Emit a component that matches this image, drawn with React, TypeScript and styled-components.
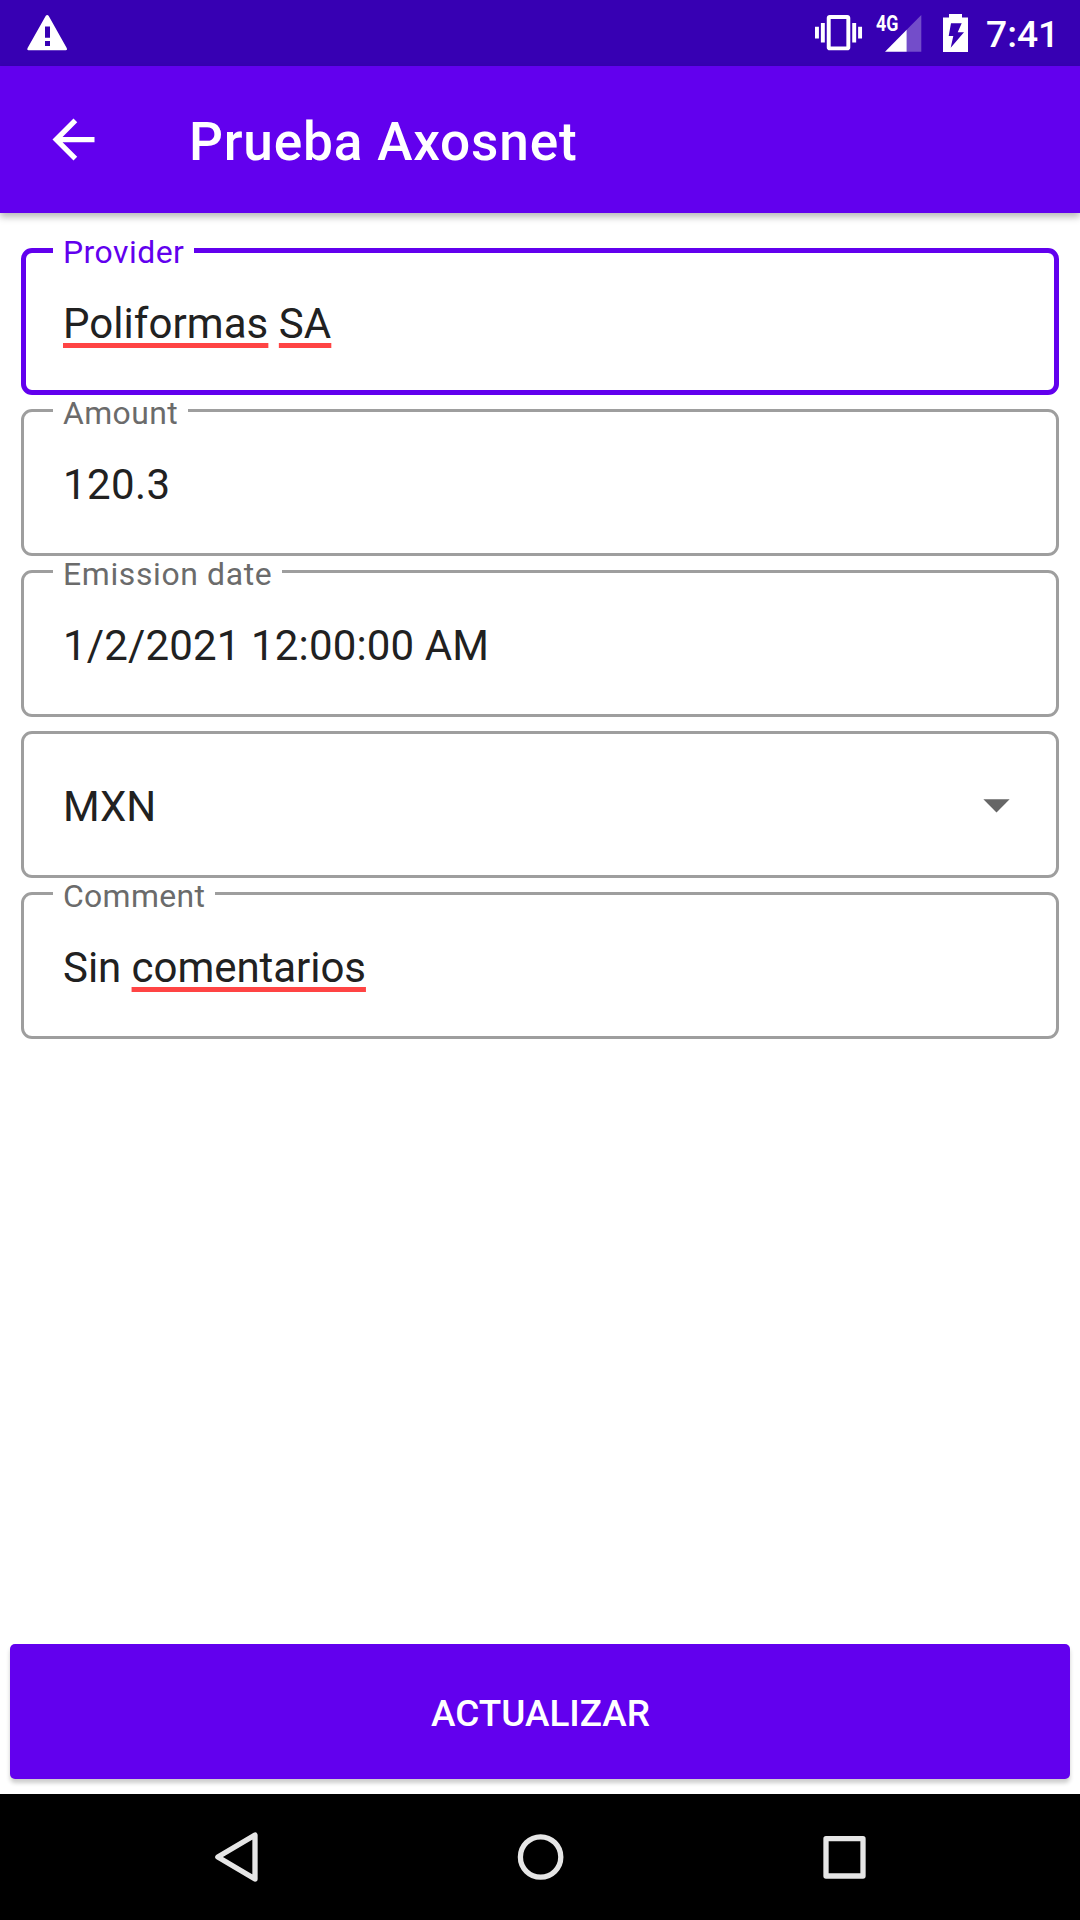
import React from "react";
import styled, { createGlobalStyle } from "styled-components";

const PRIMARY = "#6200ee";
const PRIMARY_DARK = "#3700b3";

const GlobalStyle = createGlobalStyle`
  *, *::before, *::after { box-sizing: border-box; }
  html, body { margin: 0; padding: 0; background: #fff; }
  body { font-family: Roboto, "Noto Sans", sans-serif; overflow: hidden; }
`;

const Screen = styled.div`
  display: flex;
  flex-direction: column;
  width: 1080px;
  height: 1920px;
  background: #fff;
`;

const StatusBar = styled.div`
  display: flex;
  justify-content: space-between;
  height: 66px;
  padding: 0 26px;
  background: ${PRIMARY_DARK};
  color: #fff;
`;

const StatusIcons = styled.div`
  display: flex;
  height: 66px;
`;

const StatusSvg = styled.svg`
  display: block;
  height: 66px;
  flex: none;
`;

const Clock = styled.span`
  width: 69px;
  padding-left: 1px;
  font-size: 37.2px;
  font-weight: 500;
  line-height: 68px;
  white-space: nowrap;
`;

const Signal = styled.div`
  display: grid;
  width: 57px;
  height: 66px;
  margin-left: 6px;
  & > * {
    grid-area: 1 / 1;
  }
`;

const NetworkType = styled.span`
  font-size: 22px;
  font-weight: 700;
  line-height: 47px;
  width: 28px;
  transform: scaleX(0.81);
  transform-origin: 0 0;
`;

const AppBar = styled.header`
  display: flex;
  align-items: center;
  flex: none;
  height: 147px;
  padding-left: 42px;
  background: ${PRIMARY};
  color: #fff;
  box-shadow: 0 4px 7px rgba(0, 0, 0, 0.28);
`;

const BackIcon = styled.svg`
  width: 63px;
  height: 63px;
  fill: #fff;
`;

const Title = styled.h1`
  margin: 0 0 0 84px;
  font-size: 53.2px;
  font-weight: 500;
  line-height: 62px;
  letter-spacing: 0.8px;
  padding-top: 5px;
`;

const Form = styled.main`
  display: flex;
  flex-direction: column;
  flex: 1;
  gap: 14px;
  padding: 35px 21px 0;
`;

const Field = styled.fieldset<{ $focused?: boolean }>`
  --stroke: ${(p) => (p.$focused ? 5 : 3)}px;
  margin: 0;
  min-width: 0;
  height: 147px;
  border: var(--stroke) solid ${(p) => (p.$focused ? PRIMARY : "#9e9e9e")};
  border-radius: 11px;
  padding: calc(51px - var(--stroke)) calc(42px - var(--stroke)) 0;
  color: ${(p) => (p.$focused ? PRIMARY : "#6b6b6b")};
`;

const Label = styled.legend<{ $tracking: number }>`
  height: var(--stroke);
  margin-left: -10px;
  padding: 0 10px;
  font-size: 31.9px;
  line-height: 8px;
  letter-spacing: ${(p) => p.$tracking}px;
  white-space: nowrap;
`;

const Value = styled.div<{ $tracking?: number }>`
  display: flex;
  justify-content: space-between;
  font-size: 42px;
  line-height: 50px;
  letter-spacing: ${(p) => p.$tracking ?? 0}px;
  color: #212121;
`;

const Misspelled = styled.span`
  text-decoration: underline #ff4444 5px;
  text-decoration-skip-ink: none;
  text-underline-offset: 5px;
`;

const DropdownIcon = styled.svg`
  width: 63px;
  height: 63px;
  margin: -9px -11px 0 0;
  fill: #666;
`;

const Footer = styled.footer`
  flex: none;
  padding: 0 10px 15px;
`;

const SubmitButton = styled.button`
  display: block;
  width: 100%;
  height: 135px;
  margin: 0;
  padding: 4px 0 0 1px;
  border: 0;
  border-radius: 5px;
  background: ${PRIMARY};
  color: #fff;
  font-family: inherit;
  font-size: 36.9px;
  font-weight: 500;
  line-height: 44px;
  box-shadow: 0 4px 4px rgba(0, 0, 0, 0.2);
`;

const NavigationBar = styled.nav`
  display: flex;
  justify-content: center;
  flex: none;
  height: 126px;
  background: #000;
`;

const NavKey = styled.svg`
  width: 304px;
  height: 126px;
  fill: none;
  stroke: #e6e6e6;
  stroke-width: 5.3;
  stroke-linejoin: round;
`;

export default function App() {
  return (
    <>
      <GlobalStyle />
      <Screen>
        <StatusBar>
          <StatusSvg width="44" viewBox="26 0 44 66">
            <path
              fill="#fff"
              fillRule="evenodd"
              d="M28.5 50.2Q26.7 50.2 27.6 48L45.8 15.8Q47.2 14 48.6 15.8L66.7 48Q67.6 50.2 65.8 50.2ZM45 26.5V37.7H50V26.5ZM45 41V46H50V41Z"
            />
          </StatusSvg>
          <StatusIcons>
            <StatusSvg width="55" viewBox="815 0 55 66">
              <path
                fill="#fff"
                transform="translate(815 9.2) scale(1.96)"
                d="M0 15h2V9H0v6zm3 2h2V7H3v10zm19-8v6h2V9h-2zm-3 8h2V7h-2v10zM16.5 3h-9C6.67 3 6 3.67 6 4.5v15c0 .83.67 1.5 1.5 1.5h9c.83 0 1.5-.67 1.5-1.5v-15c0-.83-.67-1.5-1.5-1.5zM16 19H8V5h8v14z"
              />
            </StatusSvg>
            <Signal>
              <StatusSvg width="57" viewBox="876 0 57 66">
                <path fill="#fff" fillOpacity="0.3" d="M906.7 29.8L921.3 15V51.7H906.7Z" />
                <path fill="#fff" d="M885 51.7L906.7 29.8V51.7Z" />
              </StatusSvg>
              <NetworkType>4G</NetworkType>
            </Signal>
            <StatusSvg width="52" viewBox="933 0 52 66">
              <path
                fill="#fff"
                fillRule="evenodd"
                d="M949 14H962V17.5H968V52H943V17.5H949ZM951 23.3L948.7 36H953.3L950.7 47.7L964 32.3H957.7L961.7 23.3Z"
              />
            </StatusSvg>
            <Clock>7:41</Clock>
          </StatusIcons>
        </StatusBar>
        <AppBar>
          <BackIcon viewBox="0 0 24 24">
            <path d="M20 11H7.83l5.59-5.59L12 4l-8 8 8 8 1.41-1.41L7.83 13H20v-2z" />
          </BackIcon>
          <Title>Prueba Axosnet</Title>
        </AppBar>
        <Form>
          <Field $focused>
            <Label $tracking={0.48}>Provider</Label>
            <Value $tracking={0.06}>
              <span>
                <Misspelled>Poliformas</Misspelled> <Misspelled>SA</Misspelled>
              </span>
            </Value>
          </Field>
          <Field>
            <Label $tracking={0.42}>Amount</Label>
            <Value $tracking={0.39}>120.3</Value>
          </Field>
          <Field>
            <Label $tracking={0.65}>Emission date</Label>
            <Value $tracking={0.15}>1/2/2021 12:00:00 AM</Value>
          </Field>
          <Field>
            <Value>
              MXN
              <DropdownIcon viewBox="0 0 24 24">
                <path d="M7 10l5 5 5-5z" />
              </DropdownIcon>
            </Value>
          </Field>
          <Field>
            <Label $tracking={0.33}>Comment</Label>
            <Value $tracking={-0.05}>
              <span>
                Sin <Misspelled>comentarios</Misspelled>
              </span>
            </Value>
          </Field>
        </Form>
        <Footer>
          <SubmitButton type="button">ACTUALIZAR</SubmitButton>
        </Footer>
        <NavigationBar>
          <NavKey viewBox="84 1794 304 126">
            <path d="M217.8 1857L255 1835V1879Z" />
          </NavKey>
          <NavKey viewBox="388 1794 304 126">
            <circle cx="540.6" cy="1857" r="20.2" />
          </NavKey>
          <NavKey viewBox="692 1794 304 126">
            <rect x="826" y="1838.7" width="37" height="37.3" />
          </NavKey>
        </NavigationBar>
      </Screen>
    </>
  );
}
